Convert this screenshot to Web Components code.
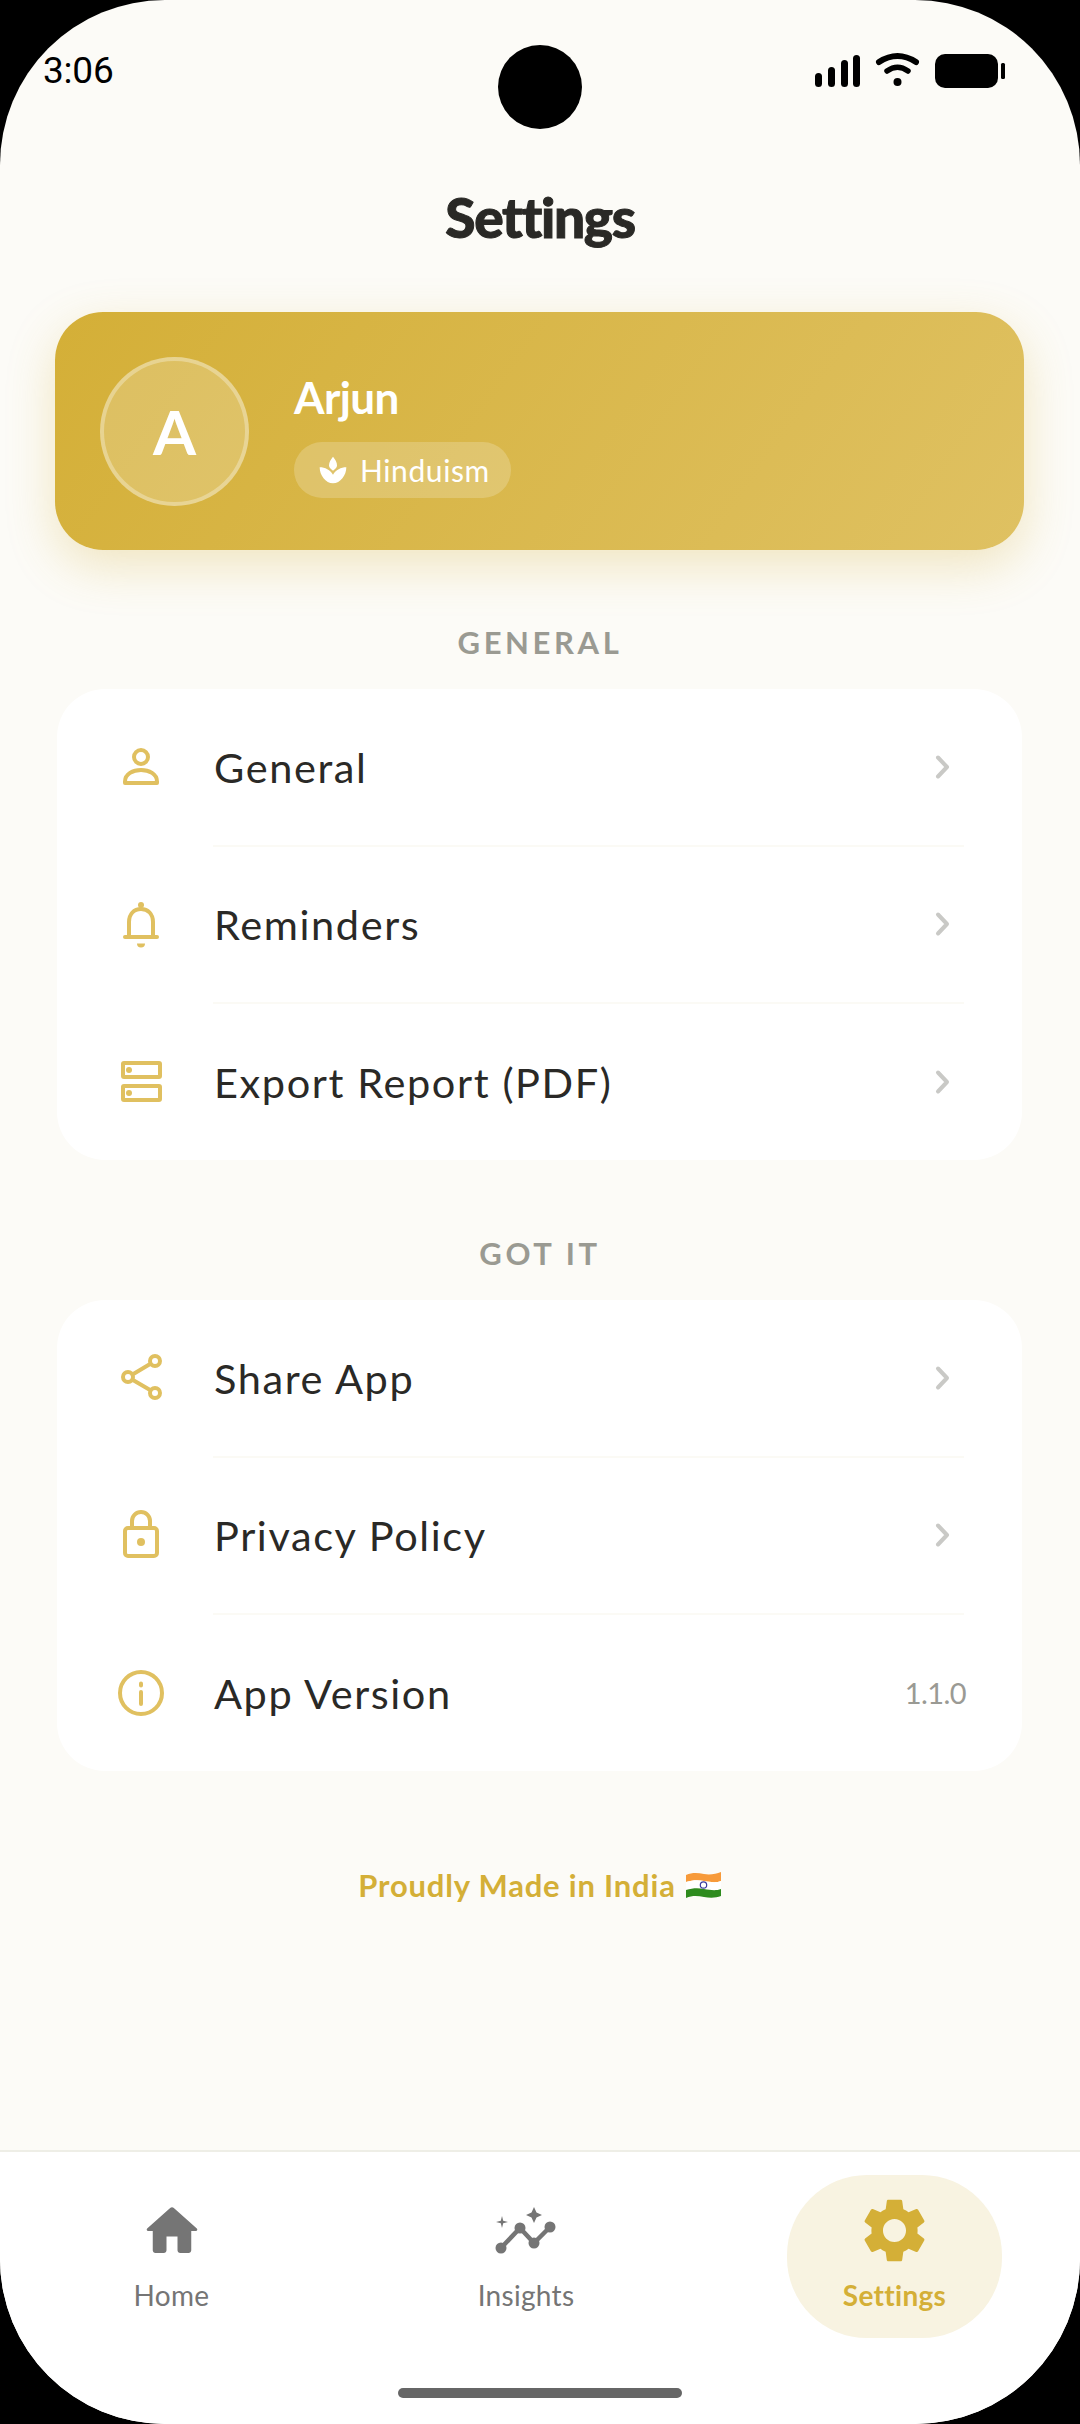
<!DOCTYPE html>
<html><head><meta charset="utf-8">
<style>
html,body{margin:0;padding:0;background:#000;}
body{width:1080px;height:2424px;overflow:hidden;font-family:"Lato","Noto Sans",sans-serif;}
</style></head><body>
<app-screen>
  <status-bar></status-bar>
  <page-title>Settings</page-title>
  <profile-card name="Arjun" initial="A" faith="Hinduism"></profile-card>
  <section-label>GENERAL</section-label>
  <settings-card>
    <settings-row icon="person" label="General"></settings-row>
    <settings-row icon="bell" label="Reminders"></settings-row>
    <settings-row icon="storage" label="Export Report (PDF)" last></settings-row>
  </settings-card>
  <section-label>GOT IT</section-label>
  <settings-card>
    <settings-row icon="share" label="Share App"></settings-row>
    <settings-row icon="lock" label="Privacy Policy"></settings-row>
    <settings-row icon="info" label="App Version" value="1.1.0" last></settings-row>
  </settings-card>
  <made-in>Proudly Made in India</made-in>
  <bottom-nav></bottom-nav>
</app-screen>
<script>
function def(name, css, html){
  customElements.define(name, class extends HTMLElement{
    connectedCallback(){
      if(this.shadowRoot) return;
      const r=this.attachShadow({mode:'open'});
      const h=typeof html==='function'?html(this):html;
      r.innerHTML='<style>'+css+'</style>'+h;
    }
  });
}
def('app-screen',`:host{display:flex;flex-direction:column;width:1080px;height:2424px;background:#fcfbf7;border-radius:165px;overflow:hidden;position:relative;color:#2a2926}`,`<slot></slot>`);

def('status-bar',`:host{display:flex;justify-content:space-between;height:130px;box-sizing:border-box;padding:48px 0 0 43px;position:relative}
.t{font:400 37px/46px Roboto,sans-serif;color:#000;letter-spacing:-.2px}
.cam{position:absolute;left:498px;top:45px;width:84px;height:84px;border-radius:50%;background:#000}
svg{position:absolute;left:810px;top:50px}`,
`<span class="t">3:06</span><div class="cam"></div>
<svg width="200" height="42" viewBox="810 50 200 42" fill="#000">
<rect x="815" y="73" width="7" height="14" rx="3.5"/><rect x="828" y="67" width="7" height="20" rx="3.5"/><rect x="841" y="60" width="7" height="27" rx="3.5"/><rect x="853" y="55" width="7" height="32" rx="3.5"/>
<path d="M879 62 Q897.5 50 916 62" fill="none" stroke="#000" stroke-width="6" stroke-linecap="round"/>
<path d="M887 71 Q897.5 63.500 908 71" fill="none" stroke="#000" stroke-width="5.500" stroke-linecap="round"/>
<circle cx="897.5" cy="82" r="4"/>
<rect x="935" y="54" width="63" height="34" rx="10"/><rect x="1001" y="63" width="4" height="16" rx="1.5"/>
</svg>`);

def('page-title',`:host{display:block;text-align:center;margin:54px 0 62px;height:66px;font:900 55px/66px Lato,sans-serif;letter-spacing:-1.3px;color:#2a2926;-webkit-text-stroke:1px #2a2926}`,`<slot></slot>`);

def('profile-card',`:host{display:flex;align-items:center;gap:45px;margin:0 56px 0 55px;height:238px;box-sizing:border-box;padding:0 45px;border-radius:48px;background:linear-gradient(125deg,#d4af37,#dfc162);box-shadow:0 16px 48px rgba(212,175,55,.28);color:#fff}
.av{width:149px;height:149px;box-sizing:border-box;border-radius:50%;border:4px solid rgba(255,255,255,.3);background:rgba(255,255,255,.2);display:flex;align-items:center;justify-content:center;font:700 62px/1 Lato,sans-serif;flex:none}
.info{display:flex;flex-direction:column;gap:17px;align-items:flex-start;margin-top:5px}
.n{font:700 44px/56px Lato,sans-serif;letter-spacing:-.6px}
.p{display:flex;align-items:center;gap:11px;height:56px;box-sizing:border-box;padding:0 21px 0 23px;border-radius:28px;background:rgba(255,255,255,.2);font:400 30px/1 Lato,sans-serif;letter-spacing:.6px}`,
e=>`<div class="av">${e.getAttribute('initial')}</div><div class="info"><div class="n">${e.getAttribute('name')}</div><div class="p"><svg width="32" height="32" viewBox="0 0 24 24" fill="#fff"><path d="M12 2C13.5 4 15 6 15 8.5 15 10 14 11 12 12.5 10 11 9 10 9 8.5 9 6 10.5 4 12 2z"/><path d="M2 10C6 10 10 12 12 15.5 14 12 18 10 22 10 22 16 17.5 22 12 22 6.5 22 2 16 2 10z"/></svg><span>${e.getAttribute('faith')}</span></div></div>`);

def('section-label',`:host{display:block;text-align:center;height:40px;margin:72px 0 27px;font:700 31px/40px Lato,sans-serif;letter-spacing:3.6px;color:#9a9a92}`,`<slot></slot>`);

def('settings-card',`:host{display:block;margin:0 58px 1.5px 57px;background:#fff;border-radius:48px}`,`<slot></slot>`);

const ICONS={
person:`<circle cx="24" cy="14" r="7"/><path d="M8 40V38.500C8 31 16 27 24 27S40 31 40 38.500V40Z"/>`,
bell:`<circle cx="24" cy="5" r="3" fill="#e0c060" stroke="none"/><path d="M12 37V22C12 14 17 9 24 9S36 14 36 22V37"/><path d="M8 37H40"/><path d="M20 43.500H28A4 4 0 0 1 20 43.500Z" fill="#e0c060" stroke="none"/>`,
storage:`<rect x="6" y="5" width="37" height="14" rx="1"/><rect x="6" y="28" width="37" height="14" rx="1"/><circle cx="12" cy="12" r="3" fill="#e0c060" stroke="none"/><circle cx="12" cy="35" r="3" fill="#e0c060" stroke="none"/>`,
share:`<circle cx="38" cy="7" r="5"/><circle cx="11" cy="23" r="5"/><circle cx="38" cy="39" r="5"/><path d="M15.500 20.500L33.500 9.800M15.500 25.700L33.500 36.300"/>`,
lock:`<rect x="8" y="17" width="32" height="28" rx="3"/><path d="M15 17V10A9 9 0 0 1 33 10V17"/><circle cx="24" cy="31" r="4" fill="#e0c060" stroke="none"/>`,
info:`<circle cx="24" cy="24" r="21"/><path d="M24 14.500V16.500M24 23V35"/>`
};
def('settings-row',`:host{display:block}
.r{display:flex;align-items:center;height:155.5px;box-sizing:border-box;padding:0 56px 0 60px}
svg.i{width:48px;height:48px;flex:none;overflow:visible;margin-right:49px}
.l{flex:1;font:400 41.5px/56px Lato,sans-serif;letter-spacing:1.6px;color:#2a2926}
.v{font:400 29px/40px Lato,sans-serif;color:#9a9a94;letter-spacing:-.6px}
svg.c{width:46px;height:46px;flex:none}
.d{height:2px;margin:0 58px 0 156px;background:#fbfaf5}`,
e=>{
 const v=e.getAttribute('value');
 return `<div class="r"><svg class="i" viewBox="0 0 48 48" fill="none" stroke="#e0c060" stroke-width="4" stroke-linecap="round" stroke-linejoin="round">${ICONS[e.getAttribute('icon')]}</svg><span class="l">${e.getAttribute('label')}</span>${v?`<span class="v">${v}</span>`:`<svg class="c" viewBox="0 0 46 46" fill="none" stroke="#c9c9c6" stroke-width="4" stroke-linecap="round" stroke-linejoin="round"><path d="M18 13.500L27 23 18 32.500"/></svg>`}</div>${e.hasAttribute('last')?'':'<div class="d"></div>'}`;
});

def('made-in',`:host{display:flex;justify-content:center;align-items:center;gap:9px;height:40px;margin-top:93px;font:700 31px/40px Lato,sans-serif;color:#d4af37;letter-spacing:.8px}`,
`<slot></slot><svg width="37" height="28" viewBox="0 0 37 28"><path d="M1 4C8 1 13 2 19 3S31 3 36 1V10C31 12 25 11 19 10S8 9 1 11Z" fill="#f79a3a"/><path d="M1 11C8 9 13 9 19 10S31 12 36 10V18C31 20 25 19 19 18S8 17 1 19Z" fill="#fff"/><path d="M1 19C8 17 13 17 19 18S31 20 36 18V25C31 27 25 27 19 26S8 24 1 27Z" fill="#2e8b1e"/><circle cx="18.500" cy="14" r="3.200" fill="none" stroke="#3a3aa0" stroke-width="1.200"/></svg>`);

def('bottom-nav',`:host{display:block;margin-top:auto;background:#fff;border-top:2px solid #eeeee6;height:274px;box-sizing:border-box}
.g{display:grid;grid-template-columns:343px 366px 371px;justify-items:center;padding-top:23px;height:186px;box-sizing:border-box}
.ind{width:284px;height:10px;border-radius:5px;background:#666;margin:50px auto 0}`,
`<div class="g"><nav-item label="Home"><svg width="66" height="66" viewBox="0 0 24 24" fill="#757575"><path d="M10 19v-5h4v5c0 .55.45 1 1 1h3c.55 0 1-.45 1-1v-7h1.700c.46 0 .68-.57.33-.87L12.670 3.600c-.38-.34-.96-.34-1.340 0l-8.360 7.530c-.34.3-.13.87.33.87H5v7c0 .55.45 1 1 1h3c.55 0 1-.45 1-1z"/></svg></nav-item>
<nav-item label="Insights"><svg width="72" height="66" viewBox="490 2197 72 66" fill="#757575"><path d="M501 2247L520 2227 534 2242 550 2226" fill="none" stroke="#757575" stroke-width="4.500"/><circle cx="501" cy="2247" r="5.500"/><circle cx="520" cy="2227" r="5.500"/><circle cx="534" cy="2242" r="5.500"/><circle cx="550" cy="2226" r="5.500"/><path d="M534 2206L536.500 2211.500 542 2214 536.500 2216.500 534 2222 531.500 2216.500 526 2214 531.500 2211.500Z"/><path d="M502 2215L503.200 2219.800 508 2221 503.200 2222.200 502 2227 500.800 2222.200 496 2221 500.800 2219.800Z"/></svg></nav-item>
<nav-item label="Settings" active><svg width="77" height="77" viewBox="0 0 24 24" fill="#d4af37"><path d="M19.140 12.940c.04-.3.06-.61.06-.94 0-.32-.02-.64-.07-.94l2.030-1.580a.49.49 0 0 0 .12-.61l-1.920-3.320a.488.488 0 0 0-.59-.22l-2.390.96c-.5-.38-1.030-.7-1.620-.94l-.36-2.540a.484.484 0 0 0-.48-.41h-3.840c-.24 0-.43.17-.47.41l-.36 2.540c-.59.24-1.130.57-1.620.94l-2.390-.96c-.22-.08-.47 0-.59.22L2.740 8.870c-.12.21-.08.47.12.61l2.030 1.580c-.05.3-.09.63-.09.94s.02.64.07.94l-2.030 1.580a.49.49 0 0 0-.12.61l1.920 3.320c.12.22.37.29.59.22l2.390-.96c.5.38 1.030.7 1.620.94l.36 2.540c.05.24.24.41.48.41h3.840c.24 0 .44-.17.47-.41l.36-2.540c.59-.24 1.130-.56 1.620-.94l2.390.96c.22.08.47 0 .59-.22l1.920-3.320c.12-.22.07-.47-.12-.61l-2.010-1.580zM12 15.600c-1.980 0-3.600-1.620-3.600-3.600s1.620-3.600 3.600-3.600 3.600 1.620 3.600 3.600-1.620 3.600-3.600 3.600z"/></svg></nav-item></div><div class="ind"></div>`);

def('nav-item',`:host{display:flex;flex-direction:column;align-items:center;width:215px;height:163px;box-sizing:border-box;padding-top:17px;border-radius:80px;color:#757575}
:host([active]){background:#f8f3e1;color:#d4af37}
.s{height:77px;display:flex;align-items:center;justify-content:center}
.l{margin-top:9px;font:400 28px/34px Lato,sans-serif;letter-spacing:.3px}
:host([active]) .l{font-weight:700}`,
e=>`<div class="s"><slot></slot></div><div class="l">${e.getAttribute('label')}</div>`);
</script>
</body></html>
